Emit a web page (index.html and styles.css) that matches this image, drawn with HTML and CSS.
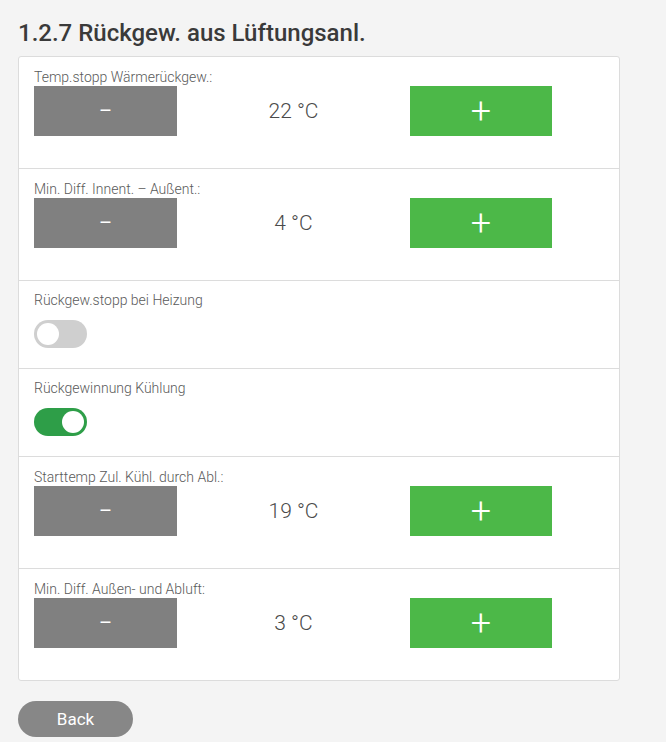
FILE: index.html
```html
<!DOCTYPE html>
<html lang="de">
<head>
  <meta charset="UTF-8">
  <meta name="viewport" content="width=device-width, initial-scale=1.0">
  <title>Rückgew. aus Lüftungsanl.</title>
  <link rel="stylesheet" href="styles.css">
</head>
<body>
  <h1>1.2.7 Rückgew. aus Lüftungsanl.</h1>

  <div class="card">
    <div class="row">
      <div class="label">Temp.stopp Wärmerückgew.:</div>
      <div class="stepper">
        <button class="btn minus">–</button>
        <div class="value">22 °C</div>
        <button class="btn plus">+</button>
      </div>
    </div>

    <div class="row">
      <div class="label">Min. Diff. Innent. – Außent.:</div>
      <div class="stepper">
        <button class="btn minus">–</button>
        <div class="value">4 °C</div>
        <button class="btn plus">+</button>
      </div>
    </div>

    <div class="row toggle-row">
      <div class="label">Rückgew.stopp bei Heizung</div>
      <label class="switch">
        <input type="checkbox">
        <span class="slider"></span>
      </label>
    </div>

    <div class="row toggle-row">
      <div class="label">Rückgewinnung Kühlung</div>
      <label class="switch">
        <input type="checkbox" checked>
        <span class="slider"></span>
      </label>
    </div>

    <div class="row">
      <div class="label">Starttemp Zul. Kühl. durch Abl.:</div>
      <div class="stepper">
        <button class="btn minus">–</button>
        <div class="value">19 °C</div>
        <button class="btn plus">+</button>
      </div>
    </div>

    <div class="row">
      <div class="label">Min. Diff. Außen- und Abluft:</div>
      <div class="stepper">
        <button class="btn minus">–</button>
        <div class="value">3 °C</div>
        <button class="btn plus">+</button>
      </div>
    </div>
  </div>

  <button class="back">Back</button>
</body>
</html>
```

FILE: styles.css
```css
body {
  margin: 0;
  padding: 19px 18px 0;
  font-family: Roboto, "Liberation Sans", sans-serif;
  background-color: #f4f4f4;
  color: #444;
}

h1 {
  margin: 0 0 9px;
  font-size: 24px;
  line-height: 28px;
  font-weight: 500;
  color: #3a3a3a;
}

.card {
  width: 600px;
  background-color: #fff;
  border: 1px solid #dcdcdc;
  border-radius: 3px;
}

.row {
  padding: 11px 15px 32px;
  border-bottom: 1px solid #dcdcdc;
}

.row:last-child {
  border-bottom: none;
}

.toggle-row {
  padding-top: 10px;
  padding-bottom: 20px;
}

.label {
  font-size: 14px;
  line-height: 18px;
  font-weight: 300;
  color: #5a5a5a;
}

.stepper {
  display: grid;
  grid-template-columns: 143px 233px 142px;
  align-items: center;
}

.btn {
  height: 50px;
  border: none;
  padding: 0;
  color: #fff;
  font-family: Roboto, "Liberation Sans", sans-serif;
  cursor: pointer;
}

.minus {
  background-color: #808080;
  font-size: 20px;
  font-weight: 400;
}

.plus {
  background-color: #4cb848;
  font-size: 36px;
  font-weight: 300;
  line-height: 1;
}

.value {
  text-align: center;
  font-size: 21px;
  font-weight: 300;
  color: #4a4a4a;
}

.switch {
  display: block;
  position: relative;
  width: 53px;
  height: 28px;
  margin-top: 11px;
}

.switch input {
  display: none;
}

.slider {
  position: absolute;
  inset: 0;
  background-color: #cfcfcf;
  border-radius: 14px;
  cursor: pointer;
}

.slider::before {
  content: "";
  position: absolute;
  left: 3px;
  top: 3px;
  width: 22px;
  height: 22px;
  border-radius: 50%;
  background-color: #fff;
}

.switch input:checked + .slider {
  background-color: #2e9e48;
}

.switch input:checked + .slider::before {
  left: 28px;
}

.back {
  display: block;
  margin-top: 20px;
  width: 115px;
  height: 36px;
  border: none;
  border-radius: 18px;
  background-color: #878787;
  color: #fff;
  font-family: Roboto, "Liberation Sans", sans-serif;
  font-size: 17px;
  cursor: pointer;
}
```
